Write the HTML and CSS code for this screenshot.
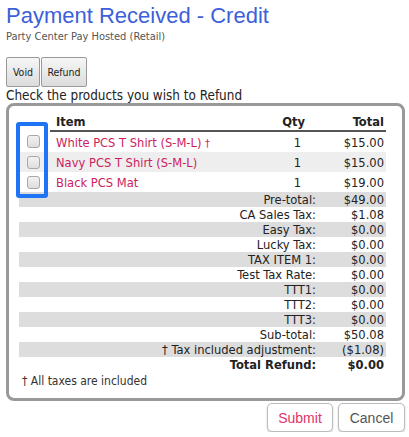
FILE: index.html
```html
<!DOCTYPE html>
<html>
<head>
    <title>Payment Received - Credit</title>
    <link rel="stylesheet" href="styles.css">
</head>
<body>
<header class="page-head">
    <h1>Payment Received - Credit</h1>
    <p>Party Center Pay Hosted (Retail)</p>
</header>

<div class="actions">
    <button class="tab-btn void-btn">Void</button>
    <button class="tab-btn refund-btn">Refund</button>
</div>

<p class="hint">Check the products you wish to Refund</p>

<div class="refund-box">
    <table class="items">
        <colgroup>
            <col class="c-check">
            <col>
            <col class="c-qty">
            <col class="c-total">
        </colgroup>
        <thead>
        <tr>
            <th></th>
            <th class="h-item">Item</th>
            <th class="h-qty">Qty</th>
            <th class="h-total">Total</th>
        </tr>
        </thead>
        <tbody>
        <tr class="item">
            <td><input type="checkbox"></td>
            <td class="name">White PCS T Shirt (S-M-L) <span class="dag">&dagger;</span></td>
            <td class="qty">1</td>
            <td class="amt">$15.00</td>
        </tr>
        <tr class="item alt">
            <td><input type="checkbox"></td>
            <td class="name">Navy PCS T Shirt (S-M-L)</td>
            <td class="qty">1</td>
            <td class="amt">$15.00</td>
        </tr>
        <tr class="item">
            <td><input type="checkbox"></td>
            <td class="name">Black PCS Mat</td>
            <td class="qty">1</td>
            <td class="amt">$19.00</td>
        </tr>
        <tr class="sum shade"><td colspan="3">Pre-total:</td><td class="amt">$49.00</td></tr>
        <tr class="sum"><td colspan="3">CA Sales Tax:</td><td class="amt">$1.08</td></tr>
        <tr class="sum shade"><td colspan="3">Easy Tax:</td><td class="amt">$0.00</td></tr>
        <tr class="sum"><td colspan="3">Lucky Tax:</td><td class="amt">$0.00</td></tr>
        <tr class="sum shade"><td colspan="3">TAX ITEM 1:</td><td class="amt">$0.00</td></tr>
        <tr class="sum"><td colspan="3">Test Tax Rate:</td><td class="amt">$0.00</td></tr>
        <tr class="sum shade"><td colspan="3">TTT1:</td><td class="amt">$0.00</td></tr>
        <tr class="sum"><td colspan="3">TTT2:</td><td class="amt">$0.00</td></tr>
        <tr class="sum shade"><td colspan="3">TTT3:</td><td class="amt">$0.00</td></tr>
        <tr class="sum"><td colspan="3">Sub-total:</td><td class="amt">$50.08</td></tr>
        <tr class="sum shade"><td colspan="3">&dagger; Tax included adjustment:</td><td class="amt">($1.08)</td></tr>
        <tr class="sum grand"><td colspan="3">Total Refund:</td><td class="amt">$0.00</td></tr>
        </tbody>
    </table>
    <p class="note">&dagger; All taxes are included</p>
    <div class="check-mark"></div>
</div>

<div class="form-buttons">
    <button class="btn btn-submit">Submit</button>
    <button class="btn">Cancel</button>
</div>
</body>
</html>
```
FILE: styles.css
```css
body {
    margin: 0;
    padding: 0 4px 0 6px;
    font-family: "DejaVu Sans", Verdana, sans-serif;
    font-stretch: condensed;
    color: #222;
    background-color: #ffffff;
}
.page-head h1 {
    font-family: "Liberation Sans", Arial, sans-serif;
    font-stretch: normal;
    font-weight: normal;
    font-size: 22px;
    line-height: 26px;
    color: #3d5fd9;
    margin: 3px 0 0 0;
}
.page-head p {
    font-size: 11px;
    line-height: 13px;
    color: #555;
    margin: 1px 0 0 0;
}
.actions {
    display: flex;
    margin-top: 14px;
}
.tab-btn {
    font-family: inherit;
    font-stretch: condensed;
    font-size: 10.5px;
    color: #222;
    height: 30px;
    padding: 0;
    border: 1px solid #999;
    border-radius: 2px;
    background: linear-gradient(#f6f6f6, #dcdcdc);
    margin-right: 1px;
}
.void-btn {
    width: 34px;
}
.refund-btn {
    width: 46px;
}
.hint {
    font-size: 13.4px;
    line-height: 15px;
    margin: 1px 0 0 0;
    color: #222;
}
.refund-box {
    position: relative;
    border: 3px solid #999;
    border-radius: 8px;
    padding: 7px 16px 10px 10px;
}
.items {
    width: 100%;
    border-collapse: collapse;
    font-size: 12.8px;
}
.c-check {
    width: 31px;
}
.c-qty {
    width: 58px;
}
.c-total {
    width: 67px;
}
.items th {
    font-weight: bold;
    height: 17px;
    padding: 0;
    color: #222;
}
.items th.h-item,
.items th.h-qty,
.items th.h-total {
    border-bottom: 2px solid #555;
}
.h-item {
    text-align: left;
    padding-left: 6px !important;
}
.h-qty {
    text-align: right;
    padding-right: 14px !important;
}
.h-total {
    text-align: right;
    padding-right: 2px !important;
}
.items td {
    padding: 0;
}
.item td {
    height: 20px;
}
.item td:first-child {
    text-align: center;
    padding-right: 3px;
}
.item.alt {
    background-color: #eeeeee;
}
.name {
    color: #cc1d5e;
    padding-left: 6px !important;
}
.dag {
    color: #cc1d5e;
    font-size: 11px;
}
.qty {
    text-align: right;
    padding-right: 18px !important;
}
.amt {
    text-align: right;
    padding-right: 2px !important;
}
.sum td {
    height: 15px;
    line-height: 15px;
}
.sum td:first-child {
    text-align: right;
    padding-right: 3px;
}
.sum.shade {
    background-color: #dddddd;
}
.sum.grand td {
    font-weight: bold;
}
input[type="checkbox"] {
    appearance: none;
    -webkit-appearance: none;
    width: 13px;
    height: 13px;
    margin: 3px 0 0 0;
    border: 1px solid #a8a8a8;
    border-radius: 3px;
    background: linear-gradient(#f2f2f2, #dedede);
}
.note {
    font-size: 12px;
    line-height: 14px;
    margin: 2px 0 0 3px;
    color: #333;
}
.check-mark {
    position: absolute;
    left: 7px;
    top: 16px;
    width: 32px;
    height: 76px;
    box-sizing: border-box;
    border: 4px solid #1e74f5;
    border-radius: 3px;
}
.form-buttons {
    display: flex;
    justify-content: flex-end;
    gap: 5px;
    margin-top: 2px;
}
.btn {
    font-family: "Liberation Sans", Arial, sans-serif;
    font-size: 14px;
    color: #555;
    width: 67px;
    height: 29px;
    background-color: #ffffff;
    border: 1px solid #bbb;
    border-radius: 5px;
    box-shadow: 0 1px 2px rgba(0, 0, 0, 0.2);
}
.btn-submit {
    color: #e0336a;
    width: 66px;
}
```
